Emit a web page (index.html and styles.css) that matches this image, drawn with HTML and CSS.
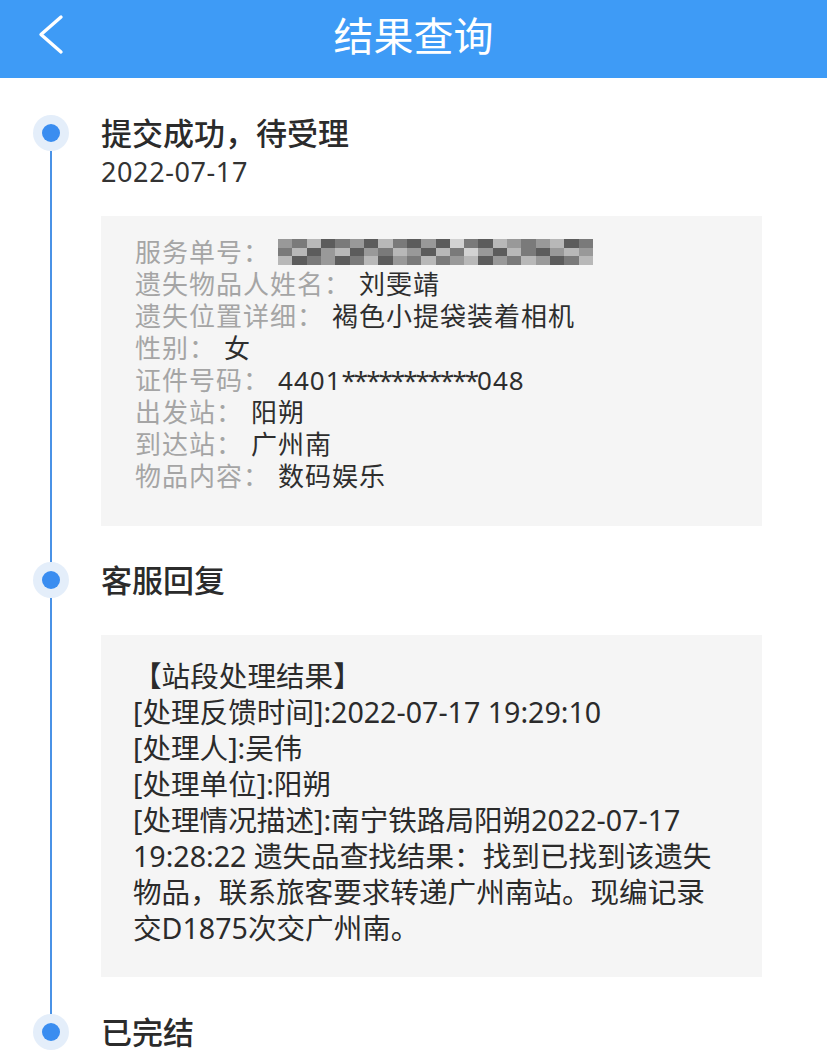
FILE: index.html
```html
<!DOCTYPE html>
<html lang="zh-CN">
<head>
    <meta charset="UTF-8">
    <meta name="viewport" content="width=device-width, initial-scale=1.0">
    <title>结果查询</title>
    <link rel="stylesheet" href="styles.css">
</head>
<body>

    <div class="topbar">
        <a class="back" href="#">
            <svg width="30" height="44" viewBox="0 0 30 44">
                <polyline points="24,4 4,21.5 24,39" fill="none" stroke="#fff" stroke-width="3.4" stroke-linecap="round" stroke-linejoin="round"/>
            </svg>
        </a>
        <h1>结果查询</h1>
    </div>

    <div class="timeline">

        <div class="step">
            <div class="rail">
                <span class="dot"></span>
                <span class="line"></span>
            </div>
            <div class="content first">
                <h2>提交成功，待受理</h2>
                <div class="date">2022-07-17</div>
                <div class="card info">
                    <p><span class="label">服务单号：</span>
                        <span class="mosaic">
                            <i class="m3"></i><i class="m2"></i><i class="m4"></i><i class="m1"></i><i class="m2"></i><i class="m3"></i><i class="m1"></i><i class="m4"></i><i class="m2"></i><i class="m1"></i><i class="m3"></i><i class="m1"></i><i class="m5"></i><i class="m2"></i><i class="m1"></i><i class="m4"></i><i class="m3"></i><i class="m2"></i><i class="m3"></i><i class="m4"></i><i class="m1"></i><i class="m2"></i>
                            <i class="m2"></i><i class="m4"></i><i class="m1"></i><i class="m3"></i><i class="m4"></i><i class="m1"></i><i class="m3"></i><i class="m2"></i><i class="m4"></i><i class="m3"></i><i class="m1"></i><i class="m4"></i><i class="m2"></i><i class="m5"></i><i class="m3"></i><i class="m1"></i><i class="m4"></i><i class="m2"></i><i class="m1"></i><i class="m3"></i><i class="m4"></i><i class="m3"></i>
                            <i class="m4"></i><i class="m1"></i><i class="m2"></i><i class="m3"></i><i class="m1"></i><i class="m2"></i><i class="m4"></i><i class="m1"></i><i class="m3"></i><i class="m2"></i><i class="m4"></i><i class="m2"></i><i class="m3"></i><i class="m4"></i><i class="m1"></i><i class="m3"></i><i class="m2"></i><i class="m4"></i><i class="m3"></i><i class="m1"></i><i class="m2"></i><i class="m4"></i>
                        </span>
                    </p>
                    <p><span class="label">遗失物品人姓名：</span><span class="value">刘雯靖</span></p>
                    <p><span class="label">遗失位置详细：</span><span class="value">褐色小提袋装着相机</span></p>
                    <p><span class="label">性别：</span><span class="value">女</span></p>
                    <p><span class="label">证件号码：</span><span class="value">4401<span class="stars">***********</span>048</span></p>
                    <p><span class="label">出发站：</span><span class="value">阳朔</span></p>
                    <p><span class="label">到达站：</span><span class="value">广州南</span></p>
                    <p><span class="label">物品内容：</span><span class="value">数码娱乐</span></p>
                </div>
            </div>
        </div>

        <div class="step">
            <div class="rail">
                <span class="dot"></span>
                <span class="line"></span>
            </div>
            <div class="content">
                <h2>客服回复</h2>
                <div class="card reply">
                    <p>【站段处理结果】<br>
                    [处理反馈时间]:2022-07-17 19:29:10<br>
                    [处理人]:吴伟<br>
                    [处理单位]:阳朔<br>
                    [处理情况描述]:南宁铁路局阳朔2022-07-17<br>
                    19:28:22 遗失品查找结果：找到已找到该遗失<br>
                    物品，联系旅客要求转递广州南站。现编记录<br>
                    交D1875次交广州南。</p>
                </div>
            </div>
        </div>

        <div class="step last">
            <div class="rail">
                <span class="dot"></span>
            </div>
            <div class="content">
                <h2>已完结</h2>
            </div>
        </div>

    </div>

</body>
</html>
```

FILE: styles.css
```css
body {
    margin: 0;
    font-family: "Noto Sans", "Noto Sans CJK SC", sans-serif;
    background: #fff;
    color: #2e2e2e;
}
.topbar {
    height: 78px;
    background: #3e9bf6;
    display: flex;
    align-items: center;
    justify-content: center;
    position: relative;
}
.topbar h1 {
    margin: 0 0 6px;
    font-size: 40px;
    font-weight: 400;
    color: #fff;
    line-height: 1;
}
.back {
    position: absolute;
    left: 37px;
    top: 13px;
    display: block;
}
.back svg {
    display: block;
}
.timeline {
    padding-top: 37px;
}
.step {
    display: flex;
}
.rail {
    width: 36px;
    margin-left: 33px;
    margin-right: 32px;
    display: flex;
    flex-direction: column;
    align-items: center;
    flex-shrink: 0;
}
.dot {
    width: 36px;
    height: 36px;
    border-radius: 50%;
    background: #e4eefa;
    display: flex;
    align-items: center;
    justify-content: center;
}
.dot::after {
    content: "";
    width: 18px;
    height: 18px;
    border-radius: 50%;
    background: #3a8df0;
}
.line {
    flex: 1;
    width: 2px;
    background: #4a92e6;
}
.content {
    flex: 1;
    padding-bottom: 37px;
    margin-right: 65px;
}
.content.first {
    padding-bottom: 36px;
}
.step.last .content {
    padding-bottom: 0;
}
h2 {
    margin: 0;
    font-size: 31px;
    font-weight: 500;
    line-height: 36px;
    color: #2b2b2b;
}
.date {
    margin-top: 5px;
    font-size: 27px;
    letter-spacing: 0.6px;
    line-height: 32px;
    color: #333;
}
.card {
    background: #f5f5f5;
}
.info {
    margin-top: 28px;
    padding: 20px 20px 34px 34px;
}
.info p {
    margin: 0;
    font-size: 26px;
    letter-spacing: 1px;
    line-height: 32px;
    height: 32px;
    display: flex;
    align-items: center;
}
.label {
    color: #a5a5a5;
}
.value {
    margin-left: 8px;
    color: #2e2e2e;
}
.stars {
    letter-spacing: -2px;
}
.mosaic {
    margin-left: 8px;
    width: 315px;
    height: 26px;
    display: grid;
    grid-template-columns: repeat(22, 1fr);
    grid-template-rows: repeat(3, 1fr);
}
.m1 { background: #5c5c5c; }
.m2 { background: #7a7a7a; }
.m3 { background: #999; }
.m4 { background: #b8b8b8; }
.m5 { background: #d2d2d2; }
.reply {
    margin-top: 37px;
    padding: 23px 20px 31px 32px;
}
.reply p {
    margin: 0;
    font-size: 28.6px;
    line-height: 36px;
    color: #2b2b2b;
}
```
